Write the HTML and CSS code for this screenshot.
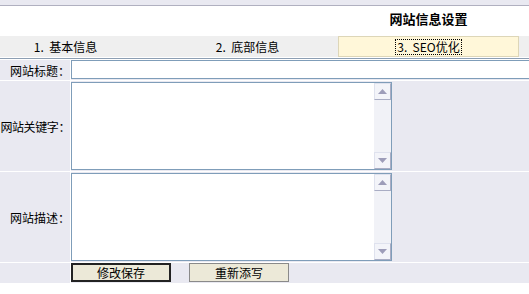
FILE: index.html
```html
<!DOCTYPE html>
<html lang="zh-CN">

<head>
    <meta charset="UTF-8">
    <title>网站信息设置</title>
    <link rel="stylesheet" href="styles.css">
</head>

<body>

    <div class="topbar"></div>

    <header class="header">
        <div></div>
        <div></div>
        <h1 class="title">网站信息设置</h1>
    </header>

    <nav class="tabs">
        <div class="tab tab-first">1.&nbsp;&nbsp;基本信息</div>
        <div class="tab">2.&nbsp;&nbsp;底部信息</div>
        <div class="tab tab-on"><span class="focus">3.&nbsp;&nbsp;SEO优化</span></div>
    </nav>

    <div class="rule"></div>

    <form class="form">
        <label class="label">网站标题：</label>
        <div class="field row-short">
            <input class="text" type="text">
        </div>

        <label class="label label-long">网站关键字：</label>
        <div class="field row-tall">
            <div class="memo">
                <textarea></textarea>
                <div class="scroll">
                    <span class="arrow"><svg width="9" height="5" viewBox="0 0 9 5"><path d="M0 5 L4.5 0 L9 5 Z" fill="#9d9db9"/></svg></span>
                    <span class="arrow"><svg width="9" height="5" viewBox="0 0 9 5"><path d="M0 0 L4.5 5 L9 0 Z" fill="#9d9db9"/></svg></span>
                </div>
            </div>
        </div>

        <label class="label">网站描述：</label>
        <div class="field row-tall">
            <div class="memo">
                <textarea></textarea>
                <div class="scroll">
                    <span class="arrow"><svg width="9" height="5" viewBox="0 0 9 5"><path d="M0 5 L4.5 0 L9 5 Z" fill="#9d9db9"/></svg></span>
                    <span class="arrow"><svg width="9" height="5" viewBox="0 0 9 5"><path d="M0 0 L4.5 5 L9 0 Z" fill="#9d9db9"/></svg></span>
                </div>
            </div>
        </div>

        <div class="label"></div>
        <div class="field row-short buttons">
            <button class="btn btn-default" type="button">修改保存</button>
            <button class="btn" type="button">重新添写</button>
        </div>
    </form>

</body>

</html>
```

FILE: styles.css
```css
body {
    margin: 0;
    font-family: "Noto Sans CJK SC", "Noto Sans", sans-serif;
    font-size: 12px;
    color: #000;
    background-color: #fff;
}

.topbar {
    height: 5px;
    background-color: #e9e9f1;
    border-bottom: 1px solid #b0b0c0;
}

/* same three columns as the tab row */
.header,
.tabs {
    display: grid;
    grid-template-columns: 157px 181px 181px;
}

.header {
    height: 30px;
    align-items: center;
}

.title {
    margin: 0;
    font-size: 13px;
    font-weight: 700;
    text-align: center;
    line-height: 16px;
    padding-bottom: 4px;
}

.tabs {
    height: 21px;
    background-color: #efefef;
    width: 529px;
    grid-template-columns: 157px 181px 181px 10px;
}

.tab {
    display: flex;
    align-items: center;
    justify-content: center;
    line-height: 14px;
}

.tab-first {
    padding-right: 26px;
}

.tab-on {
    background-color: #fff7d9;
    border: 1px solid #ddd6b8;
}

.focus {
    outline: 1px dotted #000;
    padding: 0 1px;
}

.rule {
    margin: 1px 0;
    border-top: 1px solid #8d9fb3;
}

.form {
    display: grid;
    grid-template-columns: 70px 1fr;
    grid-template-rows: 20px 90px 90px 20px;
    gap: 1px;
    margin: 0;
    background-color: #fff;
}

.label {
    display: flex;
    align-items: center;
    justify-content: flex-end;
    white-space: nowrap;
    background-color: #e9e9f1;
}

/* six characters barely fit the 70px column */
.label-long {
    letter-spacing: -0.4px;
}

.field {
    background-color: #e9e9f1;
    padding-left: 0;
}

.row-tall {
    padding-top: 1px;
}

.text {
    display: block;
    box-sizing: border-box;
    width: 480px;
    height: 19px;
    margin: 0;
    border: 1px solid #7f9db9;
    background-color: #fff;
}

.memo {
    display: flex;
    box-sizing: border-box;
    width: 321px;
    height: 88px;
    border: 1px solid #7f9db9;
    background-color: #fff;
}

.memo textarea {
    flex: 1;
    margin: 0;
    padding: 0;
    border: 0;
    resize: none;
    outline: none;
}

.scroll {
    width: 17px;
    display: flex;
    flex-direction: column;
    justify-content: space-between;
    background-color: #f1f2f7;
}

.arrow {
    box-sizing: border-box;
    height: 17px;
    display: flex;
    align-items: center;
    justify-content: center;
    background-color: #f3f4f9;
    border: 1px solid #dfe2ee;
    border-right-color: #a9adc4;
    border-bottom-color: #a9adc4;
}

.buttons {
    display: flex;
    gap: 18px;
}

.btn {
    box-sizing: border-box;
    width: 100px;
    height: 19px;
    margin: 0;
    padding: 0;
    font-family: "Noto Sans CJK SC", sans-serif;
    font-size: 12px;
    line-height: 15px;
    color: #000;
    background-color: #ece9d8;
    border: 1px solid #8a8a8a;
}

.btn-default {
    border: 2px solid #222;
}
```
